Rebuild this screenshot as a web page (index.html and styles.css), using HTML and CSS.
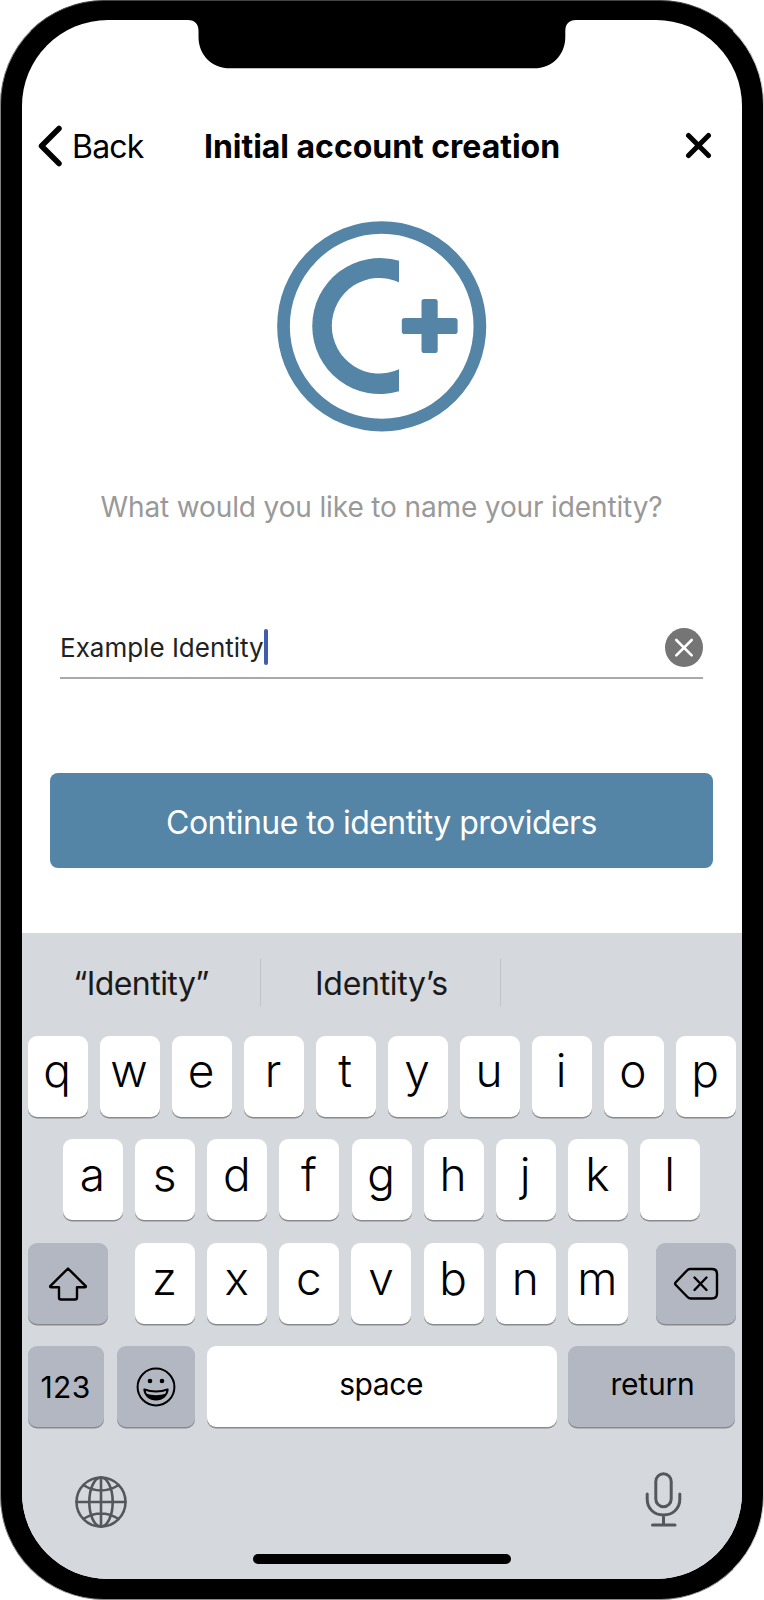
FILE: index.html
```html
<!DOCTYPE html>
<html lang="en">
<head>
<meta charset="utf-8">
<title>Initial account creation</title>
<link rel="stylesheet" href="styles.css">
</head>
<body>
<div class="phone">
  <div class="screen">
    <svg class="notch" width="389" height="50" viewBox="0 0 389 50"><path d="M0 0C7 0 10.500 4 10.500 11V17C10.500 35 24 48.300 42 48.300H346C364 48.300 377.300 35 377.300 17V11C377.300 4 381 0 388 0Z"/></svg>

    <header class="header">
      <a class="back"><svg width="26" height="42" viewBox="0 0 26 42"><path d="M23 3.500L5.500 21L23 38.500"/></svg><span class="back-text">Back</span></a>
      <h1 class="title">Initial account creation</h1>
      <svg class="close" width="28" height="28" viewBox="0 0 28 28"><path d="M4.500 3.500L24.500 23.500M24.500 3.500L4.500 23.500"/></svg>
    </header>

    <main class="content">
      <svg class="logo" width="210" height="211" viewBox="0 0 210 211">
        <ellipse cx="104.700" cy="105.300" rx="98.200" ry="98.800" fill="none" stroke="#5484a6" stroke-width="12.700"/>
        <path d="M122 39.800A67.700 68 0 1 0 122 170.300V148.300A47.500 47.800 0 1 1 122 61.300Z"/>
        <rect x="144.500" y="78" width="16.200" height="54" rx="2.800"/>
        <rect x="124.800" y="97" width="55.800" height="16" rx="2.800"/>
      </svg>
      <p class="prompt"><span>What would you like to name your identity?</span></p>
      <div class="field">
        <span class="value">Example Identity</span><i class="caret"></i>
        <svg class="clear" width="38" height="39" viewBox="0 0 38 39"><ellipse cx="19" cy="19.500" rx="19" ry="19.500"/><path d="M11.300 12L26.700 27.300M26.700 12L11.300 27.300"/></svg>
      </div>
      <button class="continue"><span>Continue to identity providers</span></button>
    </main>

    <section class="keyboard">
      <div class="suggestions">
        <span class="suggestion">“Identity”</span>
        <span class="suggestion second">Identity’s</span>
        <span class="suggestion"></span>
      </div>
      <div class="row top">
        <kbd>q</kbd><kbd>w</kbd><kbd>e</kbd><kbd>r</kbd><kbd>t</kbd><kbd>y</kbd><kbd>u</kbd><kbd>i</kbd><kbd>o</kbd><kbd>p</kbd>
      </div>
      <div class="row middle">
        <kbd>a</kbd><kbd>s</kbd><kbd>d</kbd><kbd>f</kbd><kbd>g</kbd><kbd>h</kbd><kbd>j</kbd><kbd>k</kbd><kbd>l</kbd>
      </div>
      <div class="row third">
        <kbd class="fn wide"><svg width="40" height="36" viewBox="0 0 40 36"><path d="M20 2.500L37.500 19.800Q38.500 21.200 37 21.200H29V31.500Q29 33.500 27 33.500H13Q11 33.500 11 31.500V21.200H3Q1.500 21.200 2.500 19.800Z"/></svg></kbd>
        <div class="letters"><kbd>z</kbd><kbd>x</kbd><kbd>c</kbd><kbd>v</kbd><kbd>b</kbd><kbd>n</kbd><kbd>m</kbd></div>
        <kbd class="fn wide"><svg width="46" height="36" viewBox="0 0 46 36"><path d="M17 3H39Q44 3 44 8V27.500Q44 32.500 39 32.500H18Q16 32.500 14.500 31L2.800 19Q1.500 17.700 2.800 16.300L14 4.500Q15.300 3 17 3ZM21.500 11.500L33.500 24M33.500 11.500L21.500 24"/></svg></kbd>
      </div>
      <div class="row bottom">
        <kbd class="fn numbers">123</kbd>
        <kbd class="fn emoji"><svg width="40" height="40" viewBox="0 0 40 40"><circle cx="20" cy="20" r="18.400"/><circle class="solid" cx="14" cy="14" r="2.300"/><circle class="solid" cx="26" cy="14" r="2.300"/><path d="M8.300 22.500Q20 26.500 31.700 22.500C31 28.500 26.500 32.500 20 32.500S9 28.500 8.300 22.500Z"/><path class="solid" d="M9.500 26.500Q20 30 30.500 26.500Q27 32.500 20 32.500T9.500 26.500Z"/></svg></kbd>
        <kbd class="space">space</kbd>
        <kbd class="fn return">return</kbd>
      </div>
      <div class="tools">
        <svg width="52" height="52" viewBox="0 0 52 52"><circle cx="26" cy="26" r="24.500"/><ellipse cx="26" cy="26" rx="11.700" ry="24.500"/><path d="M26 1.500V50.500M1.500 26H50.500M9 9.500Q26 19.500 43 9.500M9 42.500Q26 32.500 43 42.500"/></svg>
        <svg width="38" height="56" viewBox="0 0 38 56"><rect x="10.800" y="1.800" width="15.400" height="33" rx="7.700"/><path d="M2.200 22V27C2.200 37 9.500 43 18.500 43S34.800 37 34.800 27V22M18.500 43V53M7.500 53H30"/></svg>
      </div>
      <div class="home"></div>
    </section>
  </div>
</div>
</body>
</html>
```

FILE: styles.css
```css
* { box-sizing: border-box; }
body {
  margin: 0;
  background: #fff;
  font-family: Inter, "Liberation Sans", sans-serif;
  font-feature-settings: "calt" 0;
}
.phone {
  width: 764px;
  height: 1600px;
  padding: 19px 21px 20px;
  background: #000;
  border: 1px solid;
  border-color: #444 #ccc #888 #808080;
  border-radius: 104px;
}
.screen {
  position: relative;
  display: flex;
  flex-direction: column;
  width: 720px;
  height: 1559px;
  background: #fff;
  border-radius: 86px;
  overflow: hidden;
}
.notch { position: absolute; top: 0; left: 166px; }
.header {
  display: flex;
  align-items: center;
  height: 52px;
  margin-top: 100px;
  padding: 0 30px 0 14px;
}
.back { display: flex; align-items: center; width: 168px; gap: 10px; }
.back svg, .close { fill: none; stroke: #000; stroke-linecap: round; stroke-linejoin: round; }
.back svg { stroke-width: 5.500; }
.back-text { font-size: 32px; letter-spacing: -0.8px; }
.title {
  flex: 1;
  margin: 0;
  font-size: 32px;
  font-weight: 700;
  letter-spacing: -0.030px;
  white-space: nowrap;
}
.close { stroke-width: 5; }
.content {
  display: flex;
  flex-direction: column;
  align-items: center;
  padding: 49px 29px 0 28px;
}
.logo { fill: #5484a6; }
.prompt {
  margin: 53px 0 0;
  font-size: 28px;
  line-height: 44px;
  letter-spacing: -0.130px;
  color: #999;
  white-space: nowrap;
}
.field {
  display: flex;
  align-items: center;
  width: 643px;
  height: 62px;
  margin-top: 88px;
  border-bottom: 2px solid #a8a9ab;
}
.value { font-size: 26px; letter-spacing: 0; color: #222; white-space: nowrap; }
.caret { width: 4px; height: 36px; border-radius: 2px; background: #405cab; }
.clear { margin-left: auto; fill: #757575; }
.clear path { stroke: #fff; stroke-width: 2.600; stroke-linecap: round; }
.continue {
  width: 663px;
  height: 95px;
  margin-top: 94px;
  padding: 3px 0 0;
  border: 0;
  border-radius: 8px;
  background: #5484a6;
  color: #fff;
  font: 400 32px Inter, sans-serif;
  letter-spacing: -0.550px;
}
.keyboard {
  flex: 1;
  margin-top: 65px;
  background: #d5d8dd;
}
.suggestions {
  display: grid;
  grid-template-columns: 239px 240px 1fr;
  height: 48px;
  margin-top: 26px;
}
.suggestion {
  height: 47px;
  border-right: 1.500px solid #c0c3c7;
  font-size: 32px;
  line-height: 50px;
  letter-spacing: -0.550px;
  text-align: center;
  color: #1a1a1a;
}
.suggestion.second { padding-left: 2px; letter-spacing: -0.300px; }
.suggestion:last-child { border: 0; }
.row {
  display: flex;
  justify-content: space-between;
  height: 81px;
  margin: 29px 6.500px 0 5.500px;
}
.middle { margin: 22px 42px 0 41px; }
.third, .bottom { margin-top: 23px; }
.bottom { margin-top: 22px; }
.letters { display: flex; justify-content: space-between; width: 493px; }
kbd {
  display: block;
  width: 60px;
  height: 100%;
  padding-right: 1px;
  border-radius: 9px;
  background: #fff;
  box-shadow: 0 1.500px 0 #898a8d;
  font: 300 46px/70px Inter, sans-serif;
  text-align: center;
  color: #000;
}
.top kbd { line-height: 68px; }
.fn {
  display: flex;
  align-items: center;
  justify-content: center;
  padding-right: 0;
  background: #b3b7c1;
}
kbd svg { fill: none; stroke: #000; stroke-width: 2.400; stroke-linejoin: round; stroke-linecap: round; }
.wide { width: 80px; }
.numbers { width: 76px; font-size: 30px; font-weight: 400; letter-spacing: 0.300px; }
.emoji { width: 78px; margin-left: 1.500px; }
.emoji svg { stroke-width: 2; }
.emoji .solid { fill: #000; stroke: none; }
.space { width: 350px; font-size: 30px; font-weight: 400; line-height: 77px; letter-spacing: -0.400px; }
.return { width: 167px; font-size: 30px; font-weight: 400; letter-spacing: -0.200px; padding: 0 0 5px 1px; }
.tools {
  display: flex;
  justify-content: space-between;
  align-items: flex-start;
  margin: 45px 59px 0 53px;
  fill: none;
}
.tools svg { stroke: #54575c; stroke-width: 3; stroke-linecap: round; }
.tools svg:first-child { margin-top: 4px; stroke-width: 2.600; }
.home {
  width: 258px;
  height: 10px;
  margin: 26px auto 0 231px;
  border-radius: 5px;
  background: #000;
}
```
